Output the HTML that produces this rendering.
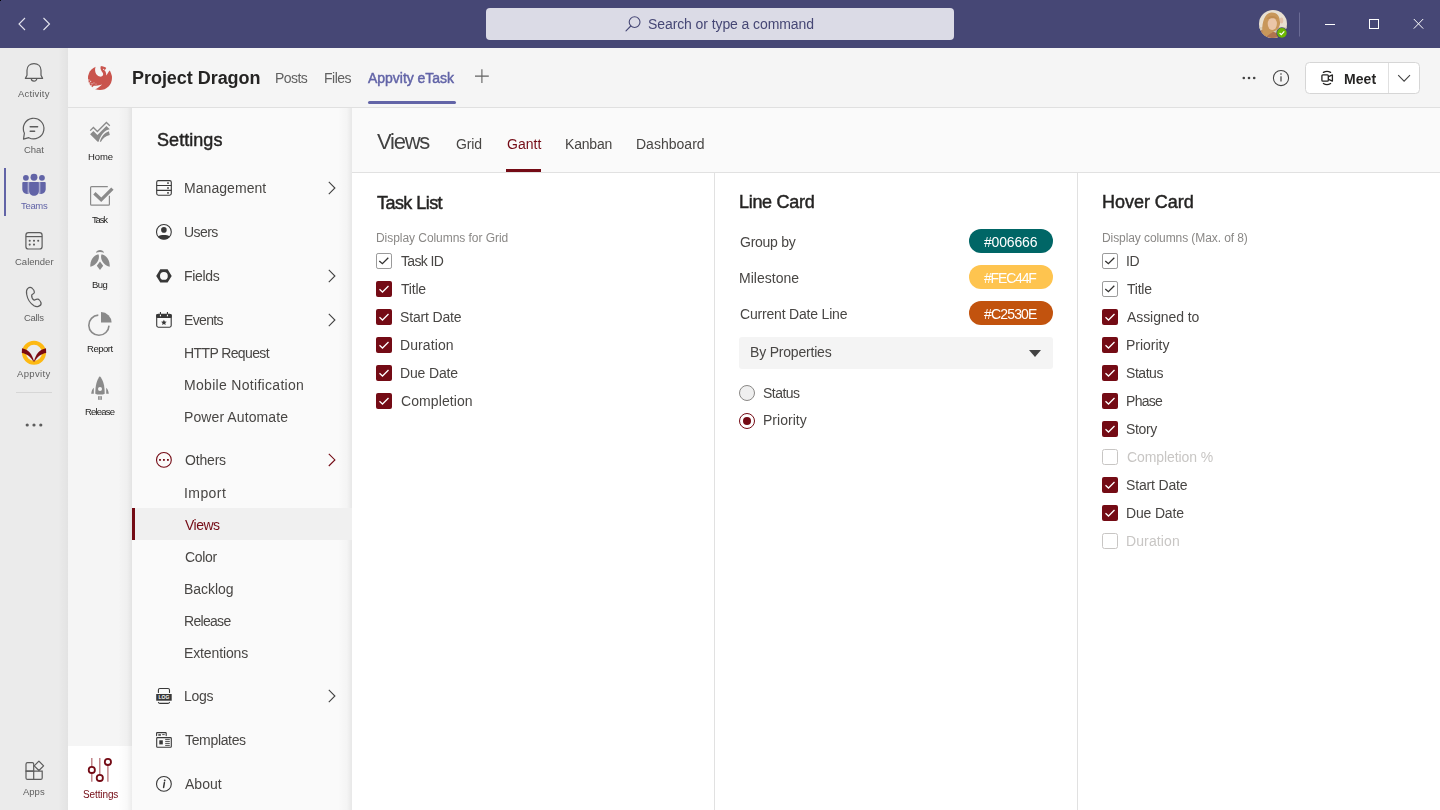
<!DOCTYPE html>
<html><head><meta charset="utf-8"><style>
html,body{margin:0;padding:0;width:1440px;height:810px;overflow:hidden;background:#fff;font-family:"Liberation Sans",sans-serif}
.t{position:absolute;white-space:nowrap;will-change:transform}
svg{overflow:visible}
</style></head><body>
<div style="position:absolute;left:0;top:0;width:1440px;height:48px;background:#464775"></div>
<div style="position:absolute;left:0;top:0;width:1px;height:1px;background:#000"></div>
<div style="position:absolute;left:486px;top:8px;width:468px;height:32px;background:#dbdbe6;border-radius:4px"></div>
<div style="position:absolute;left:0;top:48px;width:68px;height:762px;background:#ebebeb"></div>
<div style="position:absolute;left:58px;top:48px;width:10px;height:762px;background:linear-gradient(to right,rgba(0,0,0,0),rgba(0,0,0,0.035))"></div>
<div style="position:absolute;left:68px;top:48px;width:1372px;height:59px;background:#f5f5f5"></div>
<div style="position:absolute;left:68px;top:107px;width:1372px;height:1px;background:#e0e0e0"></div>
<div style="position:absolute;left:68px;top:108px;width:64px;height:702px;background:#f5f5f5"></div>
<div style="position:absolute;left:68px;top:746px;width:64px;height:64px;background:#ffffff"></div>
<div style="position:absolute;left:132px;top:108px;width:220px;height:702px;background:#fafafa"></div>
<div style="position:absolute;left:118px;top:108px;width:14px;height:702px;background:linear-gradient(to right,rgba(0,0,0,0) 0%,rgba(0,0,0,0.025) 65%,rgba(0,0,0,0.075) 100%)"></div>
<div style="position:absolute;left:338px;top:108px;width:14px;height:702px;background:linear-gradient(to right,rgba(0,0,0,0) 0%,rgba(0,0,0,0.025) 65%,rgba(0,0,0,0.075) 100%)"></div>
<div style="position:absolute;left:352px;top:108px;width:6px;height:64px;background:linear-gradient(to left,rgba(0,0,0,0),rgba(0,0,0,0.04))"></div>
<div style="position:absolute;left:132px;top:508px;width:220px;height:32px;background:#f0f0f0"></div>
<div style="position:absolute;left:132px;top:508px;width:3px;height:32px;background:#740b15"></div>
<div style="position:absolute;left:352px;top:108px;width:1088px;height:64px;background:#fafafa"></div>
<div style="position:absolute;left:352px;top:172px;width:1088px;height:1px;background:#e1e1e1"></div>
<div style="position:absolute;left:352px;top:173px;width:1088px;height:637px;background:#ffffff"></div>
<div style="position:absolute;left:506px;top:169px;width:35px;height:3px;background:#740b15"></div>
<div style="position:absolute;left:714px;top:173px;width:1px;height:637px;background:#e1e1e1"></div>
<div style="position:absolute;left:1077px;top:173px;width:1px;height:637px;background:#e1e1e1"></div>
<svg style="position:absolute;left:0;top:0" width="1440" height="810" viewBox="0 0 1440 810"><path d="M25 18 L19 24 L25 30 M43.5 18 L49.5 24 L43.5 30" fill="none" stroke="#e4e4ee" stroke-width="1.1"/>
<circle cx="634.6" cy="22.1" r="5.4" fill="none" stroke="#464775" stroke-width="1.1"/>
<path d="M630.8 26 L626 30.8" stroke="#464775" stroke-width="1.1" stroke-linecap="round"/>
<defs><clipPath id="av"><circle cx="1273" cy="24" r="14"/></clipPath></defs>
<g clip-path="url(#av)"><rect x="1259" y="10" width="28" height="28" fill="#e8dfd0"/><rect x="1259" y="27" width="28" height="11" fill="#d9ccb6"/><path d="M1259 38 L1259 31 C1263 29 1268 30 1273 31.5 C1277 33 1280 35 1281 38 Z" fill="#b0744e"/><path d="M1262.5 36 C1261.5 26 1263 14 1271 12.6 C1278 12 1280.5 18 1280 24 C1279.5 27 1278 29 1276.5 30 C1274 31 1270 34 1266 37 Z" fill="#c8975a"/><ellipse cx="1272.3" cy="23.8" rx="4.6" ry="6.2" fill="#eac6a8"/><path d="M1266.5 19.5 C1268 15 1275.5 14.5 1278.5 19.5 C1276 17.8 1270 17.6 1266.5 19.5 Z" fill="#c08c50"/><ellipse cx="1281.5" cy="20.5" rx="1.8" ry="3" fill="#e2c0a8"/></g>
<circle cx="1281.9" cy="32.9" r="5.6" fill="#464775"/><circle cx="1281.9" cy="32.9" r="4.8" fill="#6bb700"/>
<path d="M1279.6 33 L1281.3 34.6 L1284.3 31.4" fill="none" stroke="#fff" stroke-width="1.2"/>
<rect x="1299" y="12.5" width="1" height="24" fill="#6a6b95"/>
<rect x="1325" y="24" width="10" height="1" fill="#ffffff"/>
<rect x="1369.5" y="19.5" width="9" height="9" fill="none" stroke="#ffffff" stroke-width="1"/>
<path d="M1413.8 19 L1423.2 28.6 M1423.2 19 L1413.8 28.6" stroke="#ffffff" stroke-width="1"/>
<rect x="4" y="168" width="2" height="48" fill="#6264a7"/>
<path d="M27 75.3 V70.3 C27 66.3 30 63.7 34 63.7 C38 63.7 41 66.3 41 70.3 V75.3 L42.6 78.4 H25.4 Z" fill="none" stroke="#5c5c5c" stroke-width="1.2" stroke-linejoin="round"/>
<path d="M31.3 78.6 A2.75 2.6 0 0 0 36.8 78.6" fill="none" stroke="#5c5c5c" stroke-width="1.2"/>
<path d="M24.4 133.2 L23.5 139.1 L28.8 137.7 A10.3 10.3 0 1 0 24.4 133.2 Z" fill="none" stroke="#5c5c5c" stroke-width="1.2" stroke-linejoin="round"/>
<path d="M30.2 126.7 H37.6 M30.2 131.2 H34.6" stroke="#5c5c5c" stroke-width="1.5" stroke-linecap="round"/>
<circle cx="25.9" cy="177.8" r="2.9" fill="#6264a7"/><circle cx="34" cy="177.3" r="3.45" fill="#6264a7"/><circle cx="41.95" cy="177.8" r="2.9" fill="#6264a7"/>
<path d="M22.3 183 Q22.3 182.1 23.2 182.1 H28.5 V193.9 H26.8 C24.3 193.9 22.3 191.6 22.3 189 Z" fill="#6264a7"/>
<path d="M45.7 183 Q45.7 182.1 44.8 182.1 H39.5 V193.9 H41.2 C43.7 193.9 45.7 191.6 45.7 189 Z" fill="#6264a7"/>
<rect x="27.6" y="182.1" width="1.6" height="11.8" fill="#a9aad0"/><rect x="38.8" y="182.1" width="1.6" height="11.8" fill="#a9aad0"/>
<path d="M29.1 182.6 Q29.1 182.1 29.6 182.1 H38.4 Q38.9 182.1 38.9 182.6 V190.9 C38.9 193.6 36.7 195.8 34 195.8 C31.3 195.8 29.1 193.6 29.1 190.9 Z" fill="#6264a7"/>
<rect x="25.9" y="232.6" width="16.2" height="16.4" rx="2.6" fill="none" stroke="#5c5c5c" stroke-width="1.2"/>
<path d="M25.9 236.6 H42.1" stroke="#5c5c5c" stroke-width="1.2"/>
<circle cx="29.7" cy="240.7" r="1.05" fill="#5c5c5c"/>
<circle cx="34" cy="240.7" r="1.05" fill="#5c5c5c"/>
<circle cx="38.2" cy="240.7" r="1.05" fill="#5c5c5c"/>
<circle cx="29.7" cy="244.6" r="1.05" fill="#5c5c5c"/>
<circle cx="34" cy="244.6" r="1.05" fill="#5c5c5c"/>
<path d="M27.6 288.6 C28.8 287.6 30.8 287.2 32 288.1 C33 288.9 34.4 290.8 34.4 292.2 C34.4 293.6 32.6 294.2 31.7 295 C31.5 296.9 32.8 299.3 34.2 300.2 C35.2 299.7 36.8 299 38 299.2 C39.2 299.5 40.8 301.8 41.1 303 C41.3 304.2 40 305.8 38.4 306.4 C37 306.9 35.4 306.6 34 305.8 C30.5 303.5 27.5 299 26.7 294.5 C26.3 292.2 26.6 289.6 27.6 288.6 Z" fill="none" stroke="#5c5c5c" stroke-width="1.2" stroke-linejoin="round"/>
<circle cx="34" cy="352.8" r="10" fill="none" stroke="#fdb913" stroke-width="4"/>
<path d="M22 348.2 C28.5 349.5 32.2 354 34 361.4 C35.8 354 39.5 349.5 46 348.2 L46.2 353 C41.5 353.6 36.8 357 34.6 361.6 L33.4 361.6 C31.2 357 26.5 353.6 21.8 353 Z" fill="#7a0a12"/>
<rect x="16" y="392" width="36" height="1" fill="#d6d6d6"/>
<circle cx="27.2" cy="425" r="1.6" fill="#5c5c5c"/>
<circle cx="34" cy="425" r="1.6" fill="#5c5c5c"/>
<circle cx="40.8" cy="425" r="1.6" fill="#5c5c5c"/>
<path d="M27.5 762.7 H32.3 Q33.7 762.7 33.7 764.1 V771.2 H26 V764.2 Q26 762.7 27.5 762.7 Z" fill="none" stroke="#5c5c5c" stroke-width="1.2"/>
<path d="M26 771.2 H42.2 V777.9 Q42.2 779.4 40.7 779.4 H27.5 Q26 779.4 26 777.9 Z M33.7 771.2 V779.4" fill="none" stroke="#5c5c5c" stroke-width="1.2"/>
<path d="M38.9 761.1 L43.6 765.8 L38.9 770.5 L34.2 765.8 Z" fill="none" stroke="#5c5c5c" stroke-width="1.2" stroke-linejoin="round"/>
<circle cx="100" cy="78" r="12" fill="#c9544d"/>
<g fill="#f5f5f5"><path d="M94.2 62 L95.8 66.3 C94.1 70.5 95.4 75.6 99.8 76.6 C102.3 77.1 103.9 75.1 102.9 73.1 C101.7 71.1 100.3 69.6 100.5 67.8 C100.7 66.5 101.2 65.5 101.4 62 Z"/><path d="M104.2 70.2 C105.3 70.7 106 71.8 106.4 75.6 C107.4 74 108.4 72.2 109.6 70.2 L113 66 L106.5 64 C106.8 67.8 106 69.4 104.2 70.2 Z"/><path d="M102.9 68.4 L104.6 69.7 L103.2 69.9 Z"/><path d="M94.8 89.6 C97 88.5 99.8 86.6 102.2 84.4 C99.5 85.3 96.5 85.8 93.8 85.8 L92 87.5 Z"/><path d="M85 92 L94.8 89.9 L91 86.8 L87.5 84.5 Z"/></g>
<g fill="#f5f5f5"><rect x="88.2" y="79.4" width="1.2" height="1.2" opacity="0.8"/><rect x="90" y="80.8" width="1.2" height="1.2" opacity="0.7"/><rect x="89" y="82.4" width="1.2" height="1.2" opacity="0.8"/><rect x="91.4" y="83.2" width="1.2" height="1.2" opacity="0.7"/><rect x="93.4" y="82.4" width="1.1" height="1.1" opacity="0.6"/><rect x="90.6" y="85.2" width="1.2" height="1.2" opacity="0.8"/><rect x="95.5" y="83.6" width="1" height="1" opacity="0.6"/></g>
<path d="M481.9 69.2 V83 M475 76.1 H488.8" stroke="#616161" stroke-width="1.1"/>
<circle cx="1243.8" cy="78" r="1.3" fill="#424242"/>
<circle cx="1249" cy="78" r="1.3" fill="#424242"/>
<circle cx="1254.2" cy="78" r="1.3" fill="#424242"/>
<circle cx="1281" cy="78" r="7.6" fill="none" stroke="#424242" stroke-width="1.05"/>
<rect x="1280.4" y="76.3" width="1.2" height="5.2" fill="#424242"/><circle cx="1281" cy="74" r="0.8" fill="#424242"/>
<rect x="1305.5" y="62.5" width="114" height="31" rx="4" fill="#ffffff" stroke="#d6d6d6"/>
<rect x="1388" y="63" width="1" height="30" fill="#e0e0e0"/>
<rect x="1321.9" y="74.8" width="6.4" height="6.4" rx="1" fill="none" stroke="#252423" stroke-width="1.3"/>
<path d="M1328.6 76.6 L1332.4 74.9 V81.1 L1328.6 79.4" fill="none" stroke="#252423" stroke-width="1.3" stroke-linejoin="round"/>
<path d="M1323.4 72.4 Q1327 70.2 1330.6 72.4 M1323.4 83.5 Q1327 85.7 1330.6 83.5" fill="none" stroke="#252423" stroke-width="1.3" stroke-linecap="round"/>
<path d="M1398.2 75.2 L1404.1 81.1 L1410 75.2" fill="none" stroke="#424242" stroke-width="1.1"/>
<path d="M90.2 130.6 L93.4 127.5 L97.4 131.5 L106.4 122.5 L109.8 125.8" fill="none" stroke="#8a8a8a" stroke-width="1.3"/>
<path d="M90.1 134.3 L93.4 131 L97.4 135 L106.4 126 L109.8 129.2 C104.5 130.2 100.8 134.5 98.6 141.8 L97.6 141.8 Z" fill="#8a8a8a"/>
<path d="M99.8 141.8 C101.5 136.5 104.5 132.8 108.9 131.3 L109.8 135 C105.5 135.8 102.6 138.4 101 141.8 Z" fill="#8a8a8a"/>
<path d="M107.8 186.6 H91.6 Q90.6 186.6 90.6 187.6 V204.2 Q90.6 205.2 91.6 205.2 H108.4 Q109.4 205.2 109.4 204.2 V195.8" fill="none" stroke="#8a8a8a" stroke-width="1.2"/>
<path d="M94.4 193.2 L101.2 199.8 L112.4 188.6" fill="none" stroke="#8a8a8a" stroke-width="3.3"/>
<path d="M95.9 252.8 C96.5 250.8 98 249.9 100 249.9 C102 249.9 103.5 250.8 104.1 252.8 C102.6 252.2 101.5 252 100 252 C98.5 252 97.4 252.2 95.9 252.8 Z" fill="#8a8a8a"/>
<path d="M98.3 254.2 C93.5 255 89.9 260.5 90.3 266.8 C95 266 98.6 261.5 98.9 257.5 C99 256 98.8 254.8 98.3 254.2 Z" fill="#8a8a8a"/>
<path d="M101.7 254.2 C106.5 255 110.1 260.5 109.7 266.8 C105 266 101.4 261.5 101.1 257.5 C101 256 101.2 254.8 101.7 254.2 Z" fill="#8a8a8a"/>
<path d="M100 261.6 L103.2 265.7 L100 270 L96.8 265.7 Z" fill="#8a8a8a"/>
<path d="M98.3 315.1 A10.1 10.1 0 1 0 109 325.6" fill="none" stroke="#8a8a8a" stroke-width="1.6"/>
<path d="M101 322.6 V312.1 A10.6 10.6 0 0 1 111.6 322.6 Z" fill="#8a8a8a"/>
<path d="M99.8 376.2 C97 379.5 95.3 385 95.3 393.7 L97.2 394.6 H102.8 L104.7 393.7 C104.7 385 103 379.5 99.8 376.2 Z" fill="#8a8a8a"/>
<circle cx="100" cy="389" r="2" fill="#f5f5f5"/>
<path d="M91.2 393.7 C91.5 390.8 92.5 388.8 93.8 387.8 V393.7 Z M108.8 393.7 C108.5 390.8 107.5 388.8 106.2 387.8 V393.7 Z" fill="#8a8a8a"/>
<rect x="98.1" y="396.2" width="3.8" height="3.6" fill="#8a8a8a"/><rect x="99.4" y="396.2" width="1.2" height="3.6" fill="#c8c8c8"/>
<path d="M91.8 758 V781.8 M99.8 758 V781.8 M107.9 758 V781.8" stroke="#b9757b" stroke-width="1.3"/>
<circle cx="91.8" cy="769.9" r="3.1" fill="#ffffff" stroke="#740b15" stroke-width="1.8"/>
<circle cx="99.8" cy="777.9" r="3.1" fill="#ffffff" stroke="#740b15" stroke-width="1.8"/>
<circle cx="107.9" cy="761.9" r="3.1" fill="#ffffff" stroke="#740b15" stroke-width="1.8"/>
<rect x="156.7" y="180.6" width="14.6" height="14.6" rx="1.6" fill="none" stroke="#383838" stroke-width="1.1"/>
<path d="M156.7 185.5 H171.3 M156.7 190.4 H171.3" stroke="#383838" stroke-width="1.1"/>
<rect x="167.2" y="182.29999999999998" width="1.6" height="1.6" fill="#383838"/>
<rect x="167.2" y="187.2" width="1.6" height="1.6" fill="#383838"/>
<rect x="167.2" y="192.1" width="1.6" height="1.6" fill="#383838"/>
<circle cx="163.9" cy="231.9" r="7.4" fill="none" stroke="#383838" stroke-width="1.1"/>
<circle cx="163.9" cy="229.9" r="2.8" fill="#383838"/>
<path d="M158 236.4 C159.5 235.2 161.5 235 163.9 235 C166.3 235 168.3 235.2 169.8 236.4 C168.5 238.3 166.4 239.3 163.9 239.3 C161.4 239.3 159.3 238.3 158 236.4 Z" fill="#383838"/>
<path d="M160.3 269.3 H167.6 L171.7 275.9 L167.6 282.5 H160.3 L156.2 275.9 Z M167.8 275.9 A3.9 3.9 0 1 0 160 275.9 A3.9 3.9 0 1 0 167.8 275.9 Z" fill="#383838" fill-rule="evenodd"/>
<rect x="156.7" y="314.4" width="14.5" height="12.8" rx="1.6" fill="none" stroke="#383838" stroke-width="1.1"/>
<rect x="156.2" y="314" width="15.5" height="3.9" rx="1.2" fill="#383838"/>
<rect x="159.9" y="312" width="1.1" height="4" fill="#383838"/><rect x="166.9" y="312" width="1.1" height="4" fill="#383838"/>
<rect x="159.9" y="314.7" width="1.1" height="1.6" fill="#fafafa"/><rect x="166.9" y="314.7" width="1.1" height="1.6" fill="#fafafa"/>
<path d="M163.9 319.8 L164.75 321.6 L166.7 321.8 L165.25 323.1 L165.65 325 L163.9 324 L162.15 325 L162.55 323.1 L161.1 321.8 L163.05 321.6 Z" fill="#383838"/>
<circle cx="163.9" cy="459.9" r="7.4" fill="none" stroke="#740b15" stroke-width="1.1"/>
<rect x="159.1" y="459" width="1.8" height="1.8" fill="#740b15"/>
<rect x="163.0" y="459" width="1.8" height="1.8" fill="#740b15"/>
<rect x="167.0" y="459" width="1.8" height="1.8" fill="#740b15"/>
<path d="M158.4 692.4 V690 Q158.4 688.5 159.9 688.5 H168 Q169.5 688.5 169.5 690 V692.4 M158.4 702.4 Q158.8 703.4 159.9 703.4 H168 Q169.1 703.4 169.5 702.4" fill="none" stroke="#383838" stroke-width="1.1" stroke-linecap="round"/>
<rect x="156.2" y="694" width="15.5" height="6.7" fill="#383838"/>
<text x="163.95" y="699.3" font-family="Liberation Sans" font-size="5" font-weight="700" fill="#fafafa" text-anchor="middle">LOG</text>
<path d="M156.6 735.6 V733.2 Q156.6 732.6 157.2 732.6 H165.6 Q166.2 732.6 166.2 733.2 V735.6" fill="none" stroke="#383838" stroke-width="1.1" stroke-linecap="round"/>
<rect x="158.3" y="734.2" width="2.6" height="1.5" fill="#383838"/><rect x="162.2" y="734.2" width="2.5" height="0.9" fill="#383838"/>
<rect x="156.7" y="737.6" width="14.6" height="9.7" rx="0.8" fill="none" stroke="#383838" stroke-width="1.1"/>
<rect x="159.3" y="740.3" width="3.5" height="4.1" fill="#383838"/>
<path d="M165.2 739.4 H169.8 M165.2 741.4 H169.8 M165.2 743.4 H169.8 M165.2 745.4 H169.8" stroke="#383838" stroke-width="0.9"/>
<circle cx="163.9" cy="783.9" r="7.4" fill="none" stroke="#383838" stroke-width="1.1"/>
<circle cx="164.7" cy="780.4" r="0.9" fill="#383838"/>
<path d="M164.4 782.6 L163.6 787.4" stroke="#383838" stroke-width="1.5" stroke-linecap="round"/>
<path d="M328.8 181.9 L334.9 188 L328.8 194.1" fill="none" stroke="#424242" stroke-width="1.1"/>
<path d="M328.8 269.9 L334.9 276 L328.8 282.1" fill="none" stroke="#424242" stroke-width="1.1"/>
<path d="M328.8 313.9 L334.9 320 L328.8 326.1" fill="none" stroke="#424242" stroke-width="1.1"/>
<path d="M328.8 453.79999999999995 L334.9 459.9 L328.8 466.0" fill="none" stroke="#740b15" stroke-width="1.1"/>
<path d="M328.8 689.9 L334.9 696 L328.8 702.1" fill="none" stroke="#424242" stroke-width="1.1"/></svg>
<div class="t" style="left:648.40px;top:16.90px;font-size:14px;line-height:14px;font-weight:400;color:#464775;letter-spacing:-0.091px;">Search or type a command</div>
<div class="t" style="left:131.50px;top:69.31px;font-size:18px;line-height:18px;font-weight:700;color:#252423;letter-spacing:-0.038px;">Project Dragon</div>
<div class="t" style="left:275.30px;top:70.95px;font-size:14px;line-height:14px;font-weight:400;color:#616161;letter-spacing:-0.575px;">Posts</div>
<div class="t" style="left:324.30px;top:70.95px;font-size:14px;line-height:14px;font-weight:400;color:#616161;letter-spacing:-0.500px;">Files</div>
<div class="t" style="left:368.30px;top:70.95px;font-size:14px;line-height:14px;font-weight:400;color:#6264a7;letter-spacing:-0.025px;-webkit-text-stroke:0.45px #6264a7;">Appvity eTask</div>
<div style="position:absolute;left:368px;top:101px;width:88px;height:3px;border-radius:2px;background:#6264a7"></div>
<div class="t" style="left:1343.60px;top:71.65px;font-size:14px;line-height:14px;font-weight:700;color:#252423;letter-spacing:0.067px;">Meet</div>
<div class="t" style="left:18.30px;top:88.66px;font-size:9.5px;line-height:9.5px;font-weight:400;color:#616161;letter-spacing:0.186px;">Activity</div>
<div class="t" style="left:24.00px;top:144.96px;font-size:9.5px;line-height:9.5px;font-weight:400;color:#616161;letter-spacing:-0.067px;">Chat</div>
<div class="t" style="left:20.60px;top:200.96px;font-size:9.5px;line-height:9.5px;font-weight:400;color:#6264a7;letter-spacing:-0.325px;">Teams</div>
<div class="t" style="left:14.70px;top:256.96px;font-size:9.5px;line-height:9.5px;font-weight:400;color:#616161;letter-spacing:0.000px;">Calender</div>
<div class="t" style="left:24.00px;top:312.76px;font-size:9.5px;line-height:9.5px;font-weight:400;color:#616161;letter-spacing:-0.300px;">Calls</div>
<div class="t" style="left:17.30px;top:368.76px;font-size:9.5px;line-height:9.5px;font-weight:400;color:#616161;letter-spacing:0.367px;">Appvity</div>
<div class="t" style="left:23.00px;top:786.96px;font-size:9.5px;line-height:9.5px;font-weight:400;color:#616161;letter-spacing:0.000px;">Apps</div>
<div class="t" style="left:87.60px;top:151.96px;font-size:9.5px;line-height:9.5px;font-weight:400;color:#252423;letter-spacing:-0.100px;">Home</div>
<div class="t" style="left:91.50px;top:215.36px;font-size:9.5px;line-height:9.5px;font-weight:400;color:#252423;letter-spacing:-1.200px;">Task</div>
<div class="t" style="left:92.00px;top:279.76px;font-size:9.5px;line-height:9.5px;font-weight:400;color:#252423;letter-spacing:-0.500px;">Bug</div>
<div class="t" style="left:86.70px;top:343.76px;font-size:9.5px;line-height:9.5px;font-weight:400;color:#252423;letter-spacing:-0.480px;">Report</div>
<div class="t" style="left:85.30px;top:407.46px;font-size:9.5px;line-height:9.5px;font-weight:400;color:#252423;letter-spacing:-0.800px;">Release</div>
<div class="t" style="left:82.80px;top:790.33px;font-size:10px;line-height:10px;font-weight:400;color:#740b15;letter-spacing:-0.114px;">Settings</div>
<div class="t" style="left:156.50px;top:131.36px;font-size:18px;line-height:18px;font-weight:400;color:#252423;letter-spacing:0.057px;-webkit-text-stroke:0.45px #252423;">Settings</div>
<div class="t" style="left:183.50px;top:181.45px;font-size:14px;line-height:14px;font-weight:400;color:#484644;letter-spacing:0.056px;">Management</div>
<div class="t" style="left:183.50px;top:225.15px;font-size:14px;line-height:14px;font-weight:400;color:#484644;letter-spacing:-0.550px;">Users</div>
<div class="t" style="left:183.50px;top:269.15px;font-size:14px;line-height:14px;font-weight:400;color:#484644;letter-spacing:-0.340px;">Fields</div>
<div class="t" style="left:183.50px;top:313.15px;font-size:14px;line-height:14px;font-weight:400;color:#484644;letter-spacing:-0.640px;">Events</div>
<div class="t" style="left:183.50px;top:346.15px;font-size:14px;line-height:14px;font-weight:400;color:#484644;letter-spacing:-0.609px;">HTTP Request</div>
<div class="t" style="left:183.50px;top:378.15px;font-size:14px;line-height:14px;font-weight:400;color:#484644;letter-spacing:0.306px;">Mobile Notification</div>
<div class="t" style="left:183.50px;top:410.15px;font-size:14px;line-height:14px;font-weight:400;color:#484644;letter-spacing:0.092px;">Power Automate</div>
<div class="t" style="left:184.50px;top:453.35px;font-size:14px;line-height:14px;font-weight:400;color:#484644;letter-spacing:-0.180px;">Others</div>
<div class="t" style="left:183.50px;top:485.95px;font-size:14px;line-height:14px;font-weight:400;color:#484644;letter-spacing:0.420px;">Import</div>
<div class="t" style="left:184.50px;top:517.95px;font-size:14px;line-height:14px;font-weight:400;color:#740b15;letter-spacing:-0.525px;">Views</div>
<div class="t" style="left:184.50px;top:549.65px;font-size:14px;line-height:14px;font-weight:400;color:#484644;letter-spacing:-0.325px;">Color</div>
<div class="t" style="left:183.50px;top:582.15px;font-size:14px;line-height:14px;font-weight:400;color:#484644;letter-spacing:-0.050px;">Backlog</div>
<div class="t" style="left:183.50px;top:614.15px;font-size:14px;line-height:14px;font-weight:400;color:#484644;letter-spacing:-0.700px;">Release</div>
<div class="t" style="left:183.50px;top:646.15px;font-size:14px;line-height:14px;font-weight:400;color:#484644;letter-spacing:-0.122px;">Extentions</div>
<div class="t" style="left:183.50px;top:689.15px;font-size:14px;line-height:14px;font-weight:400;color:#484644;letter-spacing:-0.300px;">Logs</div>
<div class="t" style="left:184.50px;top:733.15px;font-size:14px;line-height:14px;font-weight:400;color:#484644;letter-spacing:-0.337px;">Templates</div>
<div class="t" style="left:184.50px;top:777.15px;font-size:14px;line-height:14px;font-weight:400;color:#484644;letter-spacing:0.025px;">About</div>
<div class="t" style="left:376.50px;top:130.93px;font-size:22px;line-height:22px;font-weight:400;color:#424242;letter-spacing:-1.250px;">Views</div>
<div class="t" style="left:455.60px;top:137.15px;font-size:14px;line-height:14px;font-weight:400;color:#484644;letter-spacing:-0.133px;">Grid</div>
<div class="t" style="left:506.50px;top:137.15px;font-size:14px;line-height:14px;font-weight:400;color:#740b15;letter-spacing:0.025px;">Gantt</div>
<div class="t" style="left:564.50px;top:137.15px;font-size:14px;line-height:14px;font-weight:400;color:#484644;letter-spacing:-0.180px;">Kanban</div>
<div class="t" style="left:635.50px;top:137.15px;font-size:14px;line-height:14px;font-weight:400;color:#484644;letter-spacing:0.013px;">Dashboard</div>
<div class="t" style="left:376.70px;top:193.56px;font-size:18px;line-height:18px;font-weight:400;color:#252423;letter-spacing:-0.550px;-webkit-text-stroke:0.45px #252423;">Task List</div>
<div class="t" style="left:375.70px;top:231.54px;font-size:12px;line-height:12px;font-weight:400;color:#8a8886;letter-spacing:-0.052px;">Display Columns for Grid</div>
<div class="t" style="left:400.50px;top:253.85px;font-size:14px;line-height:14px;font-weight:400;color:#484644;letter-spacing:-0.650px;">Task ID</div>
<div class="t" style="left:400.50px;top:281.85px;font-size:14px;line-height:14px;font-weight:400;color:#484644;letter-spacing:-0.200px;">Title</div>
<div class="t" style="left:399.50px;top:309.85px;font-size:14px;line-height:14px;font-weight:400;color:#484644;letter-spacing:-0.167px;">Start Date</div>
<div class="t" style="left:399.50px;top:337.85px;font-size:14px;line-height:14px;font-weight:400;color:#484644;letter-spacing:0.100px;">Duration</div>
<div class="t" style="left:399.50px;top:365.85px;font-size:14px;line-height:14px;font-weight:400;color:#484644;letter-spacing:-0.143px;">Due Date</div>
<div class="t" style="left:400.50px;top:393.85px;font-size:14px;line-height:14px;font-weight:400;color:#484644;letter-spacing:0.089px;">Completion</div>
<div class="t" style="left:738.80px;top:193.36px;font-size:18px;line-height:18px;font-weight:400;color:#252423;letter-spacing:-0.300px;-webkit-text-stroke:0.45px #252423;">Line Card</div>
<div class="t" style="left:739.80px;top:235.15px;font-size:14px;line-height:14px;font-weight:400;color:#484644;letter-spacing:-0.257px;">Group by</div>
<div class="t" style="left:738.80px;top:270.95px;font-size:14px;line-height:14px;font-weight:400;color:#484644;letter-spacing:0.025px;">Milestone</div>
<div class="t" style="left:739.80px;top:306.65px;font-size:14px;line-height:14px;font-weight:400;color:#484644;letter-spacing:-0.188px;">Current Date Line</div>
<div style="position:absolute;left:969px;top:229px;width:84px;height:24px;border-radius:12px;background:#006666"></div>
<div class="t" style="left:984.30px;top:234.55px;font-size:14px;line-height:14px;font-weight:400;color:#ffffff;letter-spacing:-0.167px;">#006666</div>
<div style="position:absolute;left:969px;top:265px;width:84px;height:24px;border-radius:12px;background:#fec44f"></div>
<div class="t" style="left:984.30px;top:270.55px;font-size:14px;line-height:14px;font-weight:400;color:#ffffff;letter-spacing:-1.167px;">#FEC44F</div>
<div style="position:absolute;left:969px;top:301px;width:84px;height:24px;border-radius:12px;background:#c2530e"></div>
<div class="t" style="left:984.30px;top:306.55px;font-size:14px;line-height:14px;font-weight:400;color:#ffffff;letter-spacing:-0.833px;">#C2530E</div>
<div style="position:absolute;left:739px;top:337px;width:314px;height:32px;border-radius:3px;background:#f4f4f4"></div>
<div class="t" style="left:750.40px;top:344.85px;font-size:14px;line-height:14px;font-weight:400;color:#484644;letter-spacing:-0.200px;">By Properties</div>
<div class="t" style="left:762.50px;top:385.95px;font-size:14px;line-height:14px;font-weight:400;color:#484644;letter-spacing:-0.520px;">Status</div>
<div class="t" style="left:762.50px;top:413.15px;font-size:14px;line-height:14px;font-weight:400;color:#484644;letter-spacing:0.029px;">Priority</div>
<div class="t" style="left:1101.60px;top:193.36px;font-size:18px;line-height:18px;font-weight:400;color:#252423;letter-spacing:-0.033px;-webkit-text-stroke:0.45px #252423;">Hover Card</div>
<div class="t" style="left:1101.60px;top:231.54px;font-size:12px;line-height:12px;font-weight:400;color:#8a8886;letter-spacing:-0.085px;">Display columns (Max. of 8)</div>
<div class="t" style="left:1125.50px;top:253.85px;font-size:14px;line-height:14px;font-weight:400;color:#484644;letter-spacing:-0.500px;">ID</div>
<div class="t" style="left:1126.50px;top:281.85px;font-size:14px;line-height:14px;font-weight:400;color:#484644;letter-spacing:-0.250px;">Title</div>
<div class="t" style="left:1126.50px;top:309.85px;font-size:14px;line-height:14px;font-weight:400;color:#484644;letter-spacing:-0.080px;">Assigned to</div>
<div class="t" style="left:1125.50px;top:337.85px;font-size:14px;line-height:14px;font-weight:400;color:#484644;letter-spacing:-0.014px;">Priority</div>
<div class="t" style="left:1125.50px;top:365.85px;font-size:14px;line-height:14px;font-weight:400;color:#484644;letter-spacing:-0.460px;">Status</div>
<div class="t" style="left:1125.50px;top:393.85px;font-size:14px;line-height:14px;font-weight:400;color:#484644;letter-spacing:-0.700px;">Phase</div>
<div class="t" style="left:1125.50px;top:421.85px;font-size:14px;line-height:14px;font-weight:400;color:#484644;letter-spacing:-0.375px;">Story</div>
<div class="t" style="left:1126.50px;top:449.85px;font-size:14px;line-height:14px;font-weight:400;color:#c8c6c4;letter-spacing:-0.082px;">Completion %</div>
<div class="t" style="left:1125.50px;top:477.85px;font-size:14px;line-height:14px;font-weight:400;color:#484644;letter-spacing:-0.167px;">Start Date</div>
<div class="t" style="left:1125.50px;top:505.85px;font-size:14px;line-height:14px;font-weight:400;color:#484644;letter-spacing:-0.171px;">Due Date</div>
<div class="t" style="left:1125.50px;top:533.85px;font-size:14px;line-height:14px;font-weight:400;color:#c8c6c4;letter-spacing:0.114px;">Duration</div>
<svg style="position:absolute;left:376px;top:253px" width="16" height="16" viewBox="0 0 16 16"><rect x="0.5" y="0.5" width="15" height="15" rx="1.6" fill="#fff" stroke="#9a9a9a"/><path d="M3.3 7.9 L6.4 10.7 L12.3 4.7" fill="none" stroke="#323130" stroke-width="1.3"/></svg>
<svg style="position:absolute;left:376px;top:281px" width="16" height="16" viewBox="0 0 16 16"><rect x="0" y="0" width="16" height="16" rx="2" fill="#740b15"/><path d="M3.5 8.2 L6.5 11 L12.5 5" fill="none" stroke="#fff" stroke-width="1.3"/></svg>
<svg style="position:absolute;left:376px;top:309px" width="16" height="16" viewBox="0 0 16 16"><rect x="0" y="0" width="16" height="16" rx="2" fill="#740b15"/><path d="M3.5 8.2 L6.5 11 L12.5 5" fill="none" stroke="#fff" stroke-width="1.3"/></svg>
<svg style="position:absolute;left:376px;top:337px" width="16" height="16" viewBox="0 0 16 16"><rect x="0" y="0" width="16" height="16" rx="2" fill="#740b15"/><path d="M3.5 8.2 L6.5 11 L12.5 5" fill="none" stroke="#fff" stroke-width="1.3"/></svg>
<svg style="position:absolute;left:376px;top:365px" width="16" height="16" viewBox="0 0 16 16"><rect x="0" y="0" width="16" height="16" rx="2" fill="#740b15"/><path d="M3.5 8.2 L6.5 11 L12.5 5" fill="none" stroke="#fff" stroke-width="1.3"/></svg>
<svg style="position:absolute;left:376px;top:393px" width="16" height="16" viewBox="0 0 16 16"><rect x="0" y="0" width="16" height="16" rx="2" fill="#740b15"/><path d="M3.5 8.2 L6.5 11 L12.5 5" fill="none" stroke="#fff" stroke-width="1.3"/></svg>
<svg style="position:absolute;left:1102px;top:253px" width="16" height="16" viewBox="0 0 16 16"><rect x="0.5" y="0.5" width="15" height="15" rx="1.6" fill="#fff" stroke="#9a9a9a"/><path d="M3.3 7.9 L6.4 10.7 L12.3 4.7" fill="none" stroke="#323130" stroke-width="1.3"/></svg>
<svg style="position:absolute;left:1102px;top:281px" width="16" height="16" viewBox="0 0 16 16"><rect x="0.5" y="0.5" width="15" height="15" rx="1.6" fill="#fff" stroke="#9a9a9a"/><path d="M3.3 7.9 L6.4 10.7 L12.3 4.7" fill="none" stroke="#323130" stroke-width="1.3"/></svg>
<svg style="position:absolute;left:1102px;top:309px" width="16" height="16" viewBox="0 0 16 16"><rect x="0" y="0" width="16" height="16" rx="2" fill="#740b15"/><path d="M3.5 8.2 L6.5 11 L12.5 5" fill="none" stroke="#fff" stroke-width="1.3"/></svg>
<svg style="position:absolute;left:1102px;top:337px" width="16" height="16" viewBox="0 0 16 16"><rect x="0" y="0" width="16" height="16" rx="2" fill="#740b15"/><path d="M3.5 8.2 L6.5 11 L12.5 5" fill="none" stroke="#fff" stroke-width="1.3"/></svg>
<svg style="position:absolute;left:1102px;top:365px" width="16" height="16" viewBox="0 0 16 16"><rect x="0" y="0" width="16" height="16" rx="2" fill="#740b15"/><path d="M3.5 8.2 L6.5 11 L12.5 5" fill="none" stroke="#fff" stroke-width="1.3"/></svg>
<svg style="position:absolute;left:1102px;top:393px" width="16" height="16" viewBox="0 0 16 16"><rect x="0" y="0" width="16" height="16" rx="2" fill="#740b15"/><path d="M3.5 8.2 L6.5 11 L12.5 5" fill="none" stroke="#fff" stroke-width="1.3"/></svg>
<svg style="position:absolute;left:1102px;top:421px" width="16" height="16" viewBox="0 0 16 16"><rect x="0" y="0" width="16" height="16" rx="2" fill="#740b15"/><path d="M3.5 8.2 L6.5 11 L12.5 5" fill="none" stroke="#fff" stroke-width="1.3"/></svg>
<svg style="position:absolute;left:1102px;top:449px" width="16" height="16" viewBox="0 0 16 16"><rect x="0.5" y="0.5" width="15" height="15" rx="2" fill="#fff" stroke="#c8c6c4"/></svg>
<svg style="position:absolute;left:1102px;top:477px" width="16" height="16" viewBox="0 0 16 16"><rect x="0" y="0" width="16" height="16" rx="2" fill="#740b15"/><path d="M3.5 8.2 L6.5 11 L12.5 5" fill="none" stroke="#fff" stroke-width="1.3"/></svg>
<svg style="position:absolute;left:1102px;top:505px" width="16" height="16" viewBox="0 0 16 16"><rect x="0" y="0" width="16" height="16" rx="2" fill="#740b15"/><path d="M3.5 8.2 L6.5 11 L12.5 5" fill="none" stroke="#fff" stroke-width="1.3"/></svg>
<svg style="position:absolute;left:1102px;top:533px" width="16" height="16" viewBox="0 0 16 16"><rect x="0.5" y="0.5" width="15" height="15" rx="2" fill="#fff" stroke="#c8c6c4"/></svg>
<svg style="position:absolute;left:739px;top:385px" width="16" height="16" viewBox="0 0 16 16"><circle cx="8" cy="8" r="7.5" fill="#efefef" stroke="#8a8886"/></svg>
<svg style="position:absolute;left:739px;top:413px" width="16" height="16" viewBox="0 0 16 16"><circle cx="8" cy="8" r="7.5" fill="#fff" stroke="#740b15"/><circle cx="8" cy="8" r="4" fill="#740b15"/></svg>
<svg style="position:absolute;left:1029px;top:350px" width="12" height="7" viewBox="0 0 12 7"><path d="M0 0 H12 L6 7 Z" fill="#424242"/></svg>

</body></html>
